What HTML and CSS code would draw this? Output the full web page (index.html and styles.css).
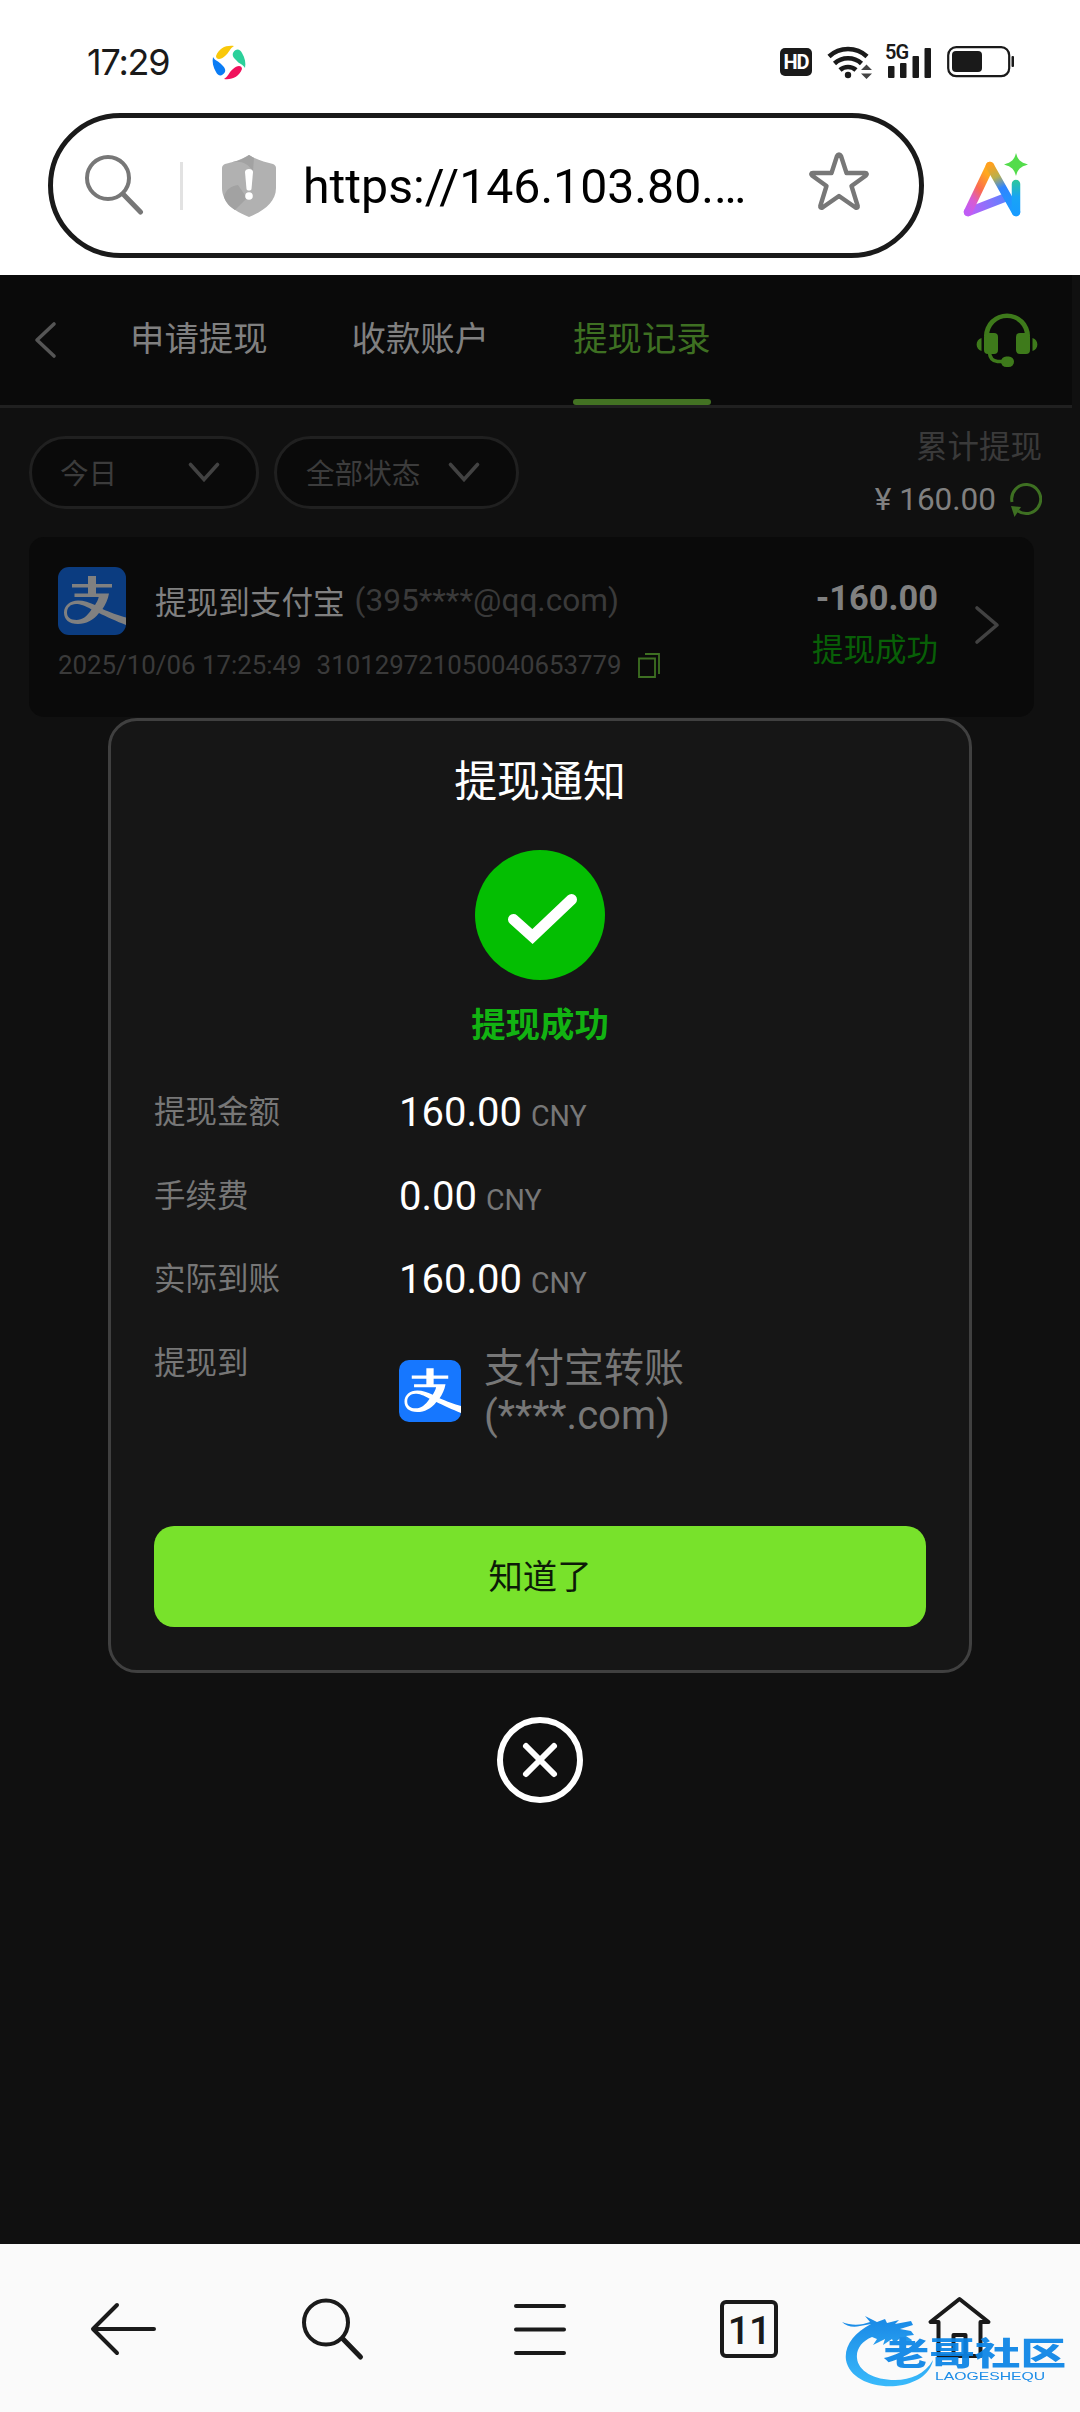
FILE: index.html
```html
<!DOCTYPE html>
<html lang="zh-CN">
<head>
<meta charset="utf-8">
<title>提现记录</title>
<link rel="stylesheet" href="styles.css">
</head>
<body>
<svg width="0" height="0" class="defs">
  <symbol id="alipay" viewBox="0 0 68 68">
    <rect width="68" height="68" rx="11" class="ali-bg"/>
    <path class="ali-fg" d="M30 9h8v8h16v3.500H38v6h13c-1 6-3.500 11-6.500 15.500C51 45 61 48.500 68 50.500V58c-9-3.500-20-8.500-27-12-6 7.500-13 11-21 11-9 0-14-4.500-14-11.500 0-7 6-12 14-12 6 0 11 1.800 17 4.500 1.700-2.500 3-5 3.700-8H16.500V26.500H30v-6H14V17h16zM33.500 42.500C27 38.500 22 37 18 37c-5.500 0-9 3.500-9 8.500 0 4.800 3.500 7.500 9.500 7.500 5.500 0 10.500-3.500 15-10.500z"/>
  </symbol>
</svg>
<header class="status">
  <span class="time">17:29</span>
  <svg class="app" width="36" height="36" viewBox="0 0 36 36">
    <path fill="#f9c80a" d="M5 12C8 4 15 1 23 2c-4 2-5 7-9 10-4 4-9 4-9 0z"/>
    <path fill="#2bd09a" d="M22 9c3-5 7-4 9 0 3 5 4 10 3 15-2-4-6-4-9-8-2-2-4-4-3-7z"/>
    <path fill="#f0125c" d="M31 25c-3 8-10 11-18 10 4-2 5-7 9-10 4-4 9-4 9 0z"/>
    <path fill="#0a7cf5" d="M14 28c-3 5-7 4-9 0C2 23 1 18 2 13c2 4 6 4 9 8 2 2 4 4 3 7z"/>
  </svg>
  <span class="hd">HD</span>
  <svg class="wifi" width="46" height="36" viewBox="0 0 46 36" fill="none" stroke="#1a1a1a" stroke-width="4.600">
    <path d="M2 12.500a28 28 0 0 1 38 0M7.500 19.500a20 20 0 0 1 27 0M13 26a12 12 0 0 1 16 0"/>
    <circle cx="21" cy="31" r="3.200" fill="#1a1a1a" stroke="none"/>
    <path fill="#444" stroke="none" d="M34 26l5.500-5.500L45 26zM34 29.500h11L39.500 35z"/>
  </svg>
  <div class="signal">
    <span>5G</span>
    <svg width="46" height="36" viewBox="0 0 46 36" fill="#1a1a1a"><rect x="2" y="22" width="6.500" height="12" rx="1"/><rect x="14" y="19" width="6.500" height="15" rx="1"/><rect x="26.500" y="12" width="6.500" height="22" rx="1"/><rect x="38.500" y="4" width="6.500" height="30" rx="1"/></svg>
  </div>
  <svg class="battery" width="68" height="32" viewBox="0 0 68 32"><rect x="1.200" y="1.200" width="61" height="29" rx="8" fill="none" stroke="#1a1a1a" stroke-width="2.200"/><rect x="5" y="5" width="30" height="21" rx="4" fill="#1a1a1a"/><rect x="64.500" y="10" width="2.500" height="11" rx="1" fill="#1a1a1a"/></svg>
</header>
<div class="address">
  <div class="pill">
    <svg class="search" width="62" height="62" viewBox="0 0 62 62" fill="none" stroke="#777" stroke-linecap="round"><circle cx="25" cy="25" r="21" stroke-width="4"/><path stroke-width="5" d="M41 42l16.500 17"/></svg>
    <i class="divider"></i>
    <svg class="shield" width="54" height="62" viewBox="0 0 54 62"><path fill="#b1b1b1" d="M27 0c8 5 16 7 24 9 2 1 3 2 3 4v20c0 14-12 23-27 29C12 56 0 47 0 33V13c0-2 1-3 3-4 8-2 16-4 24-9z"/><path fill="#a2a2a2" d="M27 0c-7 5-12 6-20 8 10-3 18-1 24 8l1-13zM2 42c2-8 7-11 14-12l9 13-12 12C8 52 4 48 2 42z"/><path fill="#fff" d="M23 17c0-4 8-4 8 0l-1.500 17c-.5 2-4.500 2-5 0z"/><circle cx="27" cy="41" r="3.800" fill="#fff"/></svg>
    <span class="url">https://146.103.80.…</span>
    <svg class="star" width="62" height="62" viewBox="0 0 62 62" fill="none" stroke="#777" stroke-width="4.400" stroke-linejoin="round"><path d="M31 4.500c1 0 1.500.5 2 1.500L38.500 23H57c2 0 2.300 1.500 1 2.500L43.500 36l6.200 20c.3 1.800-.8 2.300-2.200 1.500L31 46 14.500 57.500c-1.400.8-2.500.3-2.200-1.500L18.500 36 4 25.500C2.700 24.500 3 23 5 23h18.500L29 6c.5-1 1-1.500 2-1.500z"/></svg>
  </div>
  <svg class="ai" width="68" height="66" viewBox="0 0 68 66">
    <defs>
      <linearGradient id="g1" x1="0" y1="1" x2=".55" y2="0"><stop offset="0" stop-color="#c05cf5"/><stop offset=".3" stop-color="#d95bd0"/><stop offset=".6" stop-color="#fb6a50"/><stop offset="1" stop-color="#ffa81e"/></linearGradient>
      <linearGradient id="g2" gradientUnits="userSpaceOnUse" x1="28" y1="12" x2="52" y2="60"><stop offset="0" stop-color="#ffa01e"/><stop offset=".25" stop-color="#b9b04b"/><stop offset=".48" stop-color="#2f84ff"/><stop offset="1" stop-color="#18a0ff"/></linearGradient>
      <linearGradient id="g3" gradientUnits="userSpaceOnUse" x1="6" y1="58" x2="44" y2="44"><stop offset="0" stop-color="#bf60f8"/><stop offset="1" stop-color="#5b82ff"/></linearGradient>
      <linearGradient id="g4" gradientUnits="userSpaceOnUse" x1="54" y1="28" x2="54" y2="60"><stop offset="0" stop-color="#2bc5a0"/><stop offset=".5" stop-color="#18a5f5"/><stop offset="1" stop-color="#189cff"/></linearGradient>
    </defs>
    <g fill="none" stroke-width="8.500" stroke-linecap="round" stroke-linejoin="round"><path stroke="url(#g3)" d="M6 59l36-14"/><path stroke="url(#g1)" d="M6 59L28 13"/><path stroke="url(#g2)" d="M28 13l26 46"/><path stroke="url(#g4)" d="M54 31v28"/></g>
    <path fill="#53dc4b" d="M54 0c2 7 4 9 12 11.500C58 14 56 16 54 23c-2-7-4-9-12-11.500C50 9 52 7 54 0z"/>
  </svg>
</div>
<main class="page">
  <div class="dimmed">
    <nav class="tabs">
      <svg class="back" width="24" height="40" viewBox="0 0 24 40" fill="none" stroke="#555" stroke-width="3.600" stroke-linecap="round" stroke-linejoin="round"><path d="M20 4L3 20l17 16"/></svg>
      <a class="tab">申请提现</a><a class="tab">收款账户</a><a class="tab active">提现记录</a>
      <svg class="headset" width="62" height="56" viewBox="0 0 62 56"><g fill="#3e7a1b"><path d="M8 24a23 22.500 0 0 1 46 0h-5a18 18 0 0 0-36 0z"/><rect x="8" y="21" width="14" height="21" rx="4"/><rect x="40" y="21" width="14" height="21" rx="4"/><path d="M5.500 26v13C-1 37-1 28 5.500 26zM56.500 26v13c6.500-2 6.500-11 0-13z"/><rect x="25" y="44.500" width="13" height="10.500" rx="5.200"/></g><path fill="none" stroke="#3e7a1b" stroke-width="3.500" d="M13.500 41c.5 6 4 8 8 8.500h6"/></svg>
    </nav>
    <section class="filters">
      <div class="select day"><span>今日</span><svg width="32" height="20" viewBox="0 0 32 20"><path d="M2.500 2.500L16 17.500l13.500-15"/></svg></div>
      <div class="select state"><span>全部状态</span><svg width="32" height="20" viewBox="0 0 32 20"><path d="M2.500 2.500L16 17.500l13.500-15"/></svg></div>
      <div class="total">
        <span class="total-label">累计提现</span>
        <div class="total-row"><span>¥ 160.00</span><svg width="32" height="34" viewBox="0 0 32 34"><path fill="none" stroke="#3e7022" stroke-width="3" d="M2 19a14.500 14.500 0 1 1 6 9"/><path fill="#3e7022" d="M1 23l10 1-6.500 10z"/></svg></div>
      </div>
    </section>
    <article class="record">
      <div class="info">
        <div class="title"><svg class="logo" width="68" height="68"><use href="#alipay"/></svg><span class="to">提现到支付宝</span><span class="mail">(395****@qq.com)</span></div>
        <div class="meta"><span>2025/10/06 17:25:49</span><span>310129721050040653779</span><svg width="22" height="25" viewBox="0 0 22 25" fill="none" stroke="#3e7022" stroke-width="1.800"><path d="M1 5.500h16V24H1zM7 1h14v20"/></svg></div>
      </div>
      <div class="result"><b>-160.00</b><span>提现成功</span></div>
      <svg class="next" width="26" height="40" viewBox="0 0 26 40" fill="none" stroke="#424242" stroke-width="3.600" stroke-linecap="round" stroke-linejoin="round"><path d="M3 3l20 17L3 37"/></svg>
    </article>
  </div>
  <div class="overlay">
    <section class="dialog">
      <h1>提现通知</h1>
      <svg class="ok" width="130" height="130" viewBox="0 0 130 130"><circle cx="65" cy="65" r="65" fill="#04be02"/><path d="M38.500 69.500l19 17 39-37" fill="none" stroke="#fff" stroke-width="11" stroke-linecap="round"/></svg>
      <strong>提现成功</strong>
      <dl>
        <div><dt>提现金额</dt><dd>160.00<small>CNY</small></dd></div>
        <div><dt>手续费</dt><dd>0.00<small>CNY</small></dd></div>
        <div><dt>实际到账</dt><dd>160.00<small>CNY</small></dd></div>
        <div><dt>提现到</dt><dd class="account"><svg width="62" height="62"><use href="#alipay"/></svg><span>支付宝转账<br>(****.com)</span></dd></div>
      </dl>
      <button>知道了</button>
    </section>
    <svg class="close" width="88" height="88" viewBox="0 0 88 88" fill="none" stroke="#fff" stroke-width="6" stroke-linecap="round"><circle cx="44" cy="44" r="40"/><path d="M30 30l28 28M58 30L30 58"/></svg>
  </div>
</main>
<footer class="toolbar">
  <svg width="72" height="72" viewBox="0 0 72 72"><path d="M66 36H6M29 12L5 36l24 24"/></svg>
  <svg width="72" height="72" viewBox="0 0 72 72"><circle cx="29" cy="29.500" r="22"/><path d="M46 46l17.500 18" stroke-width="5"/></svg>
  <svg width="72" height="72" viewBox="0 0 72 72"><path d="M10 13h48M10 36.500h48M10 60h48"/></svg>
  <div class="pages"><span>11</span></div>
  <svg width="72" height="72" viewBox="0 0 72 72"><path d="M35.500 6L6.500 29h8v34h42V29h8zM29.500 63V42h12v21"/></svg>
  <div class="mark">
    <svg width="232" height="80" viewBox="0 0 232 80">
      <defs><linearGradient id="wm" gradientUnits="userSpaceOnUse" x1="0" y1="10" x2="0" y2="72"><stop offset="0" stop-color="#0b84e6"/><stop offset="1" stop-color="#2bb5fb"/></linearGradient></defs>
      <path fill="url(#wm)" d="M29 11C12 20 2 33 4 47c3 18 26 28 50 26 19-2 34-11 37-26-8 14-22 20-38 20-21 0-37-9-38-22C14 36 20 28 30 24l5 2-4 6 12-6-2 6 9-6 2 5 6-6 10 5 2-3-6-4 8-1-3-4-11-2 13-4-2-4-16 3 4-4-12 3-2-4-8 3-12-6 5 6c-8 3-18 4-28 0 4 4 11 6 18 4z"/>
      <g fill="url(#wm)"><text class="mark-cn" transform="translate(41.500 52) scale(1.450 1)">老哥社区</text><text class="mark-en" transform="translate(93 67) scale(1.500 1)">LAOGESHEQU</text></g>
    </svg>
  </div>
</footer>
</body>
</html>
```
FILE: styles.css
```css
* { box-sizing: border-box; }
body { margin: 0; width: 1080px; height: 2412px; display: flex; flex-direction: column; background: #fff; font-family: Roboto, "Noto Sans CJK SC", sans-serif; overflow: hidden; }
svg { display: block; flex: none; }
.defs { position: absolute; }
.ali-bg { fill: #1677ff; }
.ali-fg { fill: #fff; }

.status { height: 113px; flex: none; display: flex; align-items: center; padding: 11px 65px 0 87px; color: #1a1a1a; }
.time { width: 124px; font-family: Inter, sans-serif; font-size: 36px; letter-spacing: -1.2px; }
.hd { margin-left: auto; width: 32px; height: 28px; border-radius: 5px; background: #1a1a1a; color: #fff; font: bold 20px/28px Roboto, sans-serif; text-align: center; letter-spacing: -1px; }
.wifi { margin-left: 15px; }
.signal { position: relative; margin-left: 13px; }
.signal span { position: absolute; left: -1px; top: -2px; font: 600 20px/20px Roboto, sans-serif; letter-spacing: -1px; }
.battery { margin-left: 15px; }

.address { height: 162px; flex: none; display: flex; align-items: flex-start; padding-left: 48px; }
.pill { width: 876px; height: 145px; border: 5px solid #1a1a1a; border-radius: 73px; display: flex; align-items: center; padding-left: 30px; }
.search { margin-top: -3px; }
.divider { width: 3px; height: 48px; margin-left: 35px; background: #e2e2e2; }
.shield { margin-left: 39px; }
.url { width: 448px; margin-left: 27px; font-size: 48.200px; line-height: 60px; color: #000; white-space: nowrap; padding-top: 3px; }
.star { margin: -10px 0 0 57px; }
.ai { margin: 40px 0 0 38px; }

.page { position: relative; height: 1969px; flex: none; background: #101010; }
.tabs { width: 1072px; height: 133px; display: flex; align-items: center; padding-left: 34px; background: #0a0a0a; border-bottom: 3px solid #202020; }
.tab { position: relative; height: 130px; margin-left: 84px; font-size: 34.400px; line-height: 128px; color: #808080; white-space: nowrap; }
.back + .tab { margin-left: 72px; }
.tab.active { color: #3e7022; }
.tab.active::after { content: ""; position: absolute; left: 0; right: 0; bottom: 0; height: 6px; border-radius: 3px; background: #437223; }
.headset { margin-left: auto; margin-right: 34px; }

.filters { height: 129px; display: flex; padding: 0 38px 0 29px; }
.select { height: 73px; margin-top: 28px; padding-bottom: 2px; display: flex; align-items: center; justify-content: space-between; border: 3px solid #202020; border-radius: 37px; background: #0a0a0a; color: #3c3c3c; font-size: 28.600px; }
.select path { fill: none; stroke: #424242; stroke-width: 3.600; stroke-linecap: round; }
.day { width: 230px; padding-left: 28px; padding-right: 36px; }
.state { width: 245px; margin-left: 15px; padding-left: 29px; padding-right: 36px; }
.total { margin-left: auto; display: flex; flex-direction: column; align-items: flex-end; padding-top: 20px; font-size: 31.500px; line-height: 40px; }
.total-label { color: #3a3a3a; }
.total-row { display: flex; align-items: center; gap: 14px; margin-top: 12px; color: #808080; }

.record { width: 1005px; height: 180px; margin-left: 29px; display: flex; padding: 30px 34px 0 29px; border-radius: 15px; background: #0a0a0a; }
.title { display: flex; align-items: center; height: 68px; font-size: 31.600px; white-space: nowrap; }
.title span { margin-top: -2px; }
.logo { filter: brightness(.5); }
.to { margin-left: 29px; color: #808080; }
.mail { margin-left: 10px; color: #3a3a3a; }
.meta { display: flex; align-items: center; margin-top: 10px; height: 40px; font-size: 25.850px; color: #3a3a3a; }
.meta span + span { margin-left: 15px; }
.meta svg { margin-left: 16px; }
.result { margin-left: auto; margin-right: 36px; display: flex; flex-direction: column; align-items: flex-end; padding-top: 9px; line-height: 46px; font-size: 31.500px; color: #085f07; }
.result b { font-size: 34.400px; line-height: 44px; color: #808080; }
.result span { margin-top: 8px; }
.next { margin-top: 38px; }

.overlay { position: absolute; left: 108px; top: 443px; width: 864px; display: flex; flex-direction: column; align-items: center; }
.dialog { width: 864px; height: 955px; border: 3px solid #404040; border-radius: 29px; background: #161616; padding: 30px 43px 0; display: flex; flex-direction: column; align-items: center; }
h1 { margin: 0; font-size: 42.900px; line-height: 62px; font-weight: 400; color: #fff; }
.ok { margin-top: 37px; }
strong { margin-top: 20px; font-size: 34.400px; line-height: 50px; color: #12b312; }
dl { width: 100%; margin: 39px 0 0; display: flex; flex-direction: column; }
dl div { height: 83.500px; display: flex; align-items: flex-start; }
dt { width: 245px; font-size: 31.500px; line-height: 47px; color: #777; }
dd { margin: 0; font-size: 40px; line-height: 48px; color: #fff; white-space: nowrap; }
small { margin-left: 9px; font-size: 28.600px; color: #777; }
.account { display: flex; align-items: center; margin-top: 3px; line-height: 47px; color: #777; }
.account span { margin-left: 23px; padding-top: 2px; }
button { width: 772px; height: 101px; margin-top: 103px; padding: 0; border: 0; border-radius: 20px; background: #78e22b; color: #0d1b08; font: 400 34.400px/98px Roboto, "Noto Sans CJK SC", sans-serif; }
.close { margin-top: 43px; }

.toolbar { position: relative; height: 168px; flex: none; display: flex; justify-content: space-between; padding: 49px 84px 0 88px; background: #fafafa; }
.toolbar > svg { fill: none; stroke: #1a1a1a; stroke-width: 4; stroke-linecap: round; stroke-linejoin: round; }
.pages { width: 58px; height: 58px; margin: 7px 9px 7px 5px; border: 4px solid #1a1a1a; border-radius: 6px; font-size: 39px; font-weight: 500; line-height: 54px; text-align: center; color: #1a1a1a; letter-spacing: -1px; }
.mark { position: absolute; left: 842px; top: 69px; opacity: .93; }
.mark-cn { font: 900 31.500px "Noto Sans CJK SC", sans-serif; }
.mark-en { font: 400 10.500px "Liberation Sans", sans-serif; }
```
